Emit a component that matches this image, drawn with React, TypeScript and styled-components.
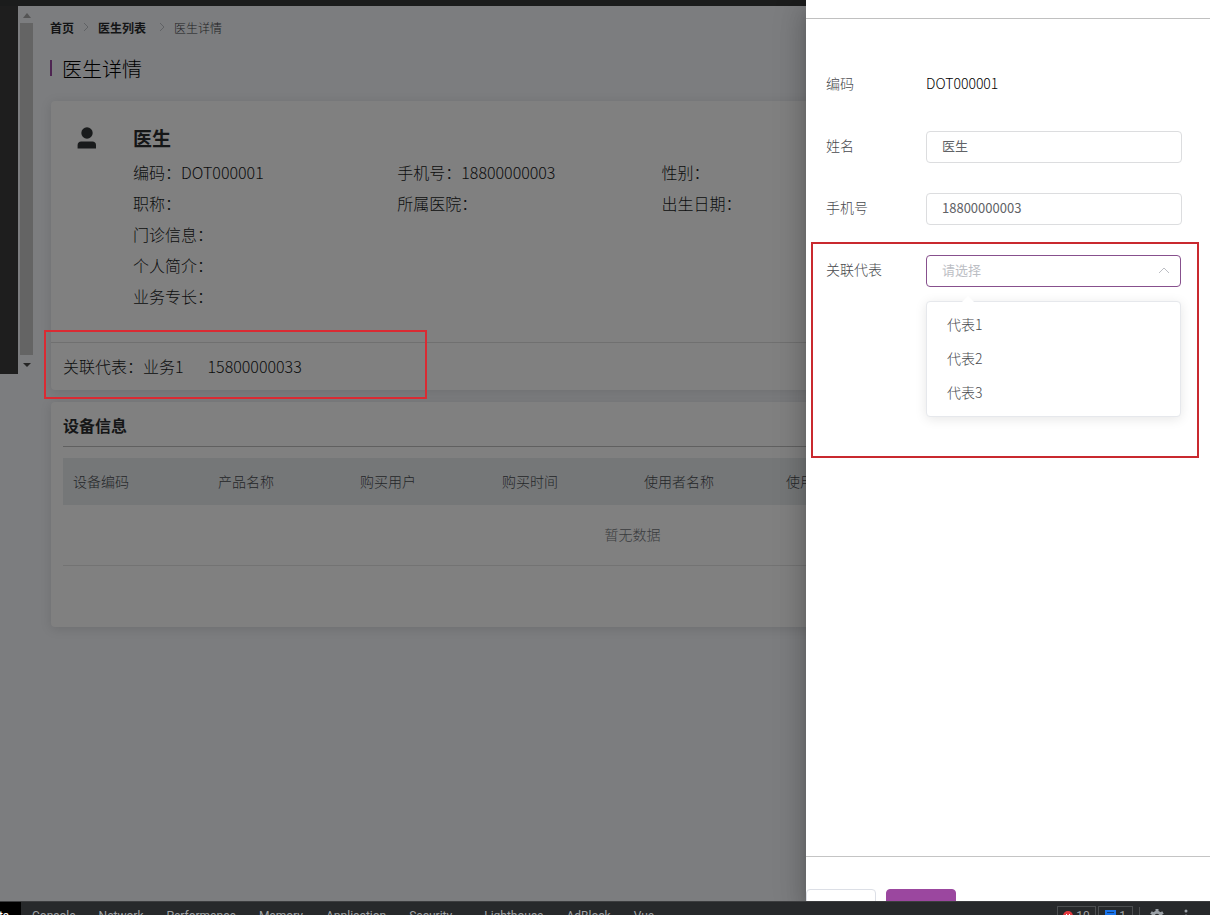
import React from "react";
import styled, { createGlobalStyle } from "styled-components";

const GlobalStyle = createGlobalStyle`
  *, *::before, *::after { box-sizing: border-box; }
  body {
    margin: 0;
    background: #7c7d7f;
    color: #0c0d0e;
    font-family: "Noto Sans CJK SC", sans-serif;
    font-size: 16px;
    font-weight: 300;
  }
  h1, h2, h3, p, ul, dl, dd, dt { margin: 0; padding: 0; font-weight: 300; }
  button, input, select { font-family: inherit; }
`;

const Screen = styled.div`
  display: flex;
  flex-direction: column;
  height: 100vh;
  overflow: hidden;
`;

const Stage = styled.div`
  position: relative;
  flex: 1;
  min-height: 0;
  overflow: hidden;
`;

const Workspace = styled.div`
  display: flex;
  align-items: flex-start;
  border-top: 6px solid #1b1c1c;
`;

const SideMenu = styled.nav`
  flex: none;
  width: 18px;
  height: 368px;
  background: #1e1e1e;
`;

const ScrollBar = styled.div`
  flex: none;
  display: flex;
  flex-direction: column;
  align-items: center;
  justify-content: space-between;
  width: 16px;
  height: 368px;
  padding: 7px 1px 6px 2px;
`;

const Thumb = styled.div`
  flex: 1;
  width: 13px;
  margin: 5px 0 8px;
  background: #646464;
`;

const Arrow = styled.svg`
  display: block;
  flex: none;
  width: 8px;
  height: 5px;
`;

const Page = styled.main`
  flex: 1;
  min-width: 0;
  padding: 9px 0 0 16px;
`;

const Breadcrumb = styled.nav`
  display: flex;
  align-items: center;
  gap: 8px;
  height: 24px;
  font-size: 12px;
  color: #202123;
`;

const Crumb = styled.a`
  color: #131415;
  font-weight: 700;
  text-decoration: none;

  &:last-of-type { padding-right: 4px; }
`;

const PageTitle = styled.h1`
  display: flex;
  align-items: center;
  gap: 10px;
  height: 32px;
  margin: 13px 0 17px;
  font-size: 20px;
  color: #000;

  &::before {
    content: "";
    width: 2px;
    height: 16px;
    background: #4e2552;
  }
`;

const Card = styled.section`
  margin: 0 0 12px 1px;
  border-radius: 4px;
  background: #808080;
  box-shadow: 0 2px 12px rgba(0, 0, 0, 0.12);
`;

const Profile = styled.div`
  display: flex;
  height: 241px;
  padding: 22px 20px 0 26px;
`;

const UserIcon = styled.svg`
  flex: none;
  width: 20px;
  height: 22px;
  margin: 4px 36px 0 0;
`;

const ProfileBody = styled.div`
  flex: 1;
`;

const DoctorName = styled.h2`
  height: 30px;
  color: #151617;
  font-size: 19px;
  line-height: 30px;
  font-weight: 700;
`;

const Facts = styled.dl`
  display: grid;
  grid-template-columns: repeat(4, 1fr);
  margin-top: 4px;
`;

const Fact = styled.div<{ $wide?: boolean }>`
  display: flex;
  grid-column: ${(p) => (p.$wide ? "1 / -1" : "auto")};
  line-height: 31px;
`;

const Related = styled.div`
  position: relative;
  display: flex;
  align-items: center;
  gap: 24px;
  height: 48px;
  padding: 0 12px 2px;
  border-top: 1px solid #707070;
`;

const HighlightBox = styled.div<{ $inset: string; $tone: string }>`
  position: absolute;
  inset: ${(p) => p.$inset};
  border: 2px solid ${(p) => p.$tone};
  pointer-events: none;
`;

const RelatedMark = styled(HighlightBox)`
  width: 383px;
`;

const DeviceCard = styled(Card)`
  height: 225px;
  padding: 0 8px 0 12px;
`;

const SectionTitle = styled.h2`
  height: 45px;
  margin-bottom: 11px;
  border-bottom: 1px solid #606060;
  color: #151617;
  font-size: 16px;
  line-height: 46px;
  font-weight: 700;
`;

const Table = styled.table`
  width: 100%;
  border-collapse: collapse;
  table-layout: fixed;
  font-size: 14px;
`;

const HeadCell = styled.th`
  height: 47px;
  padding: 0 10px 2px;
  background: #757778;
  color: #242628;
  font-weight: 300;
  text-align: left;
  white-space: nowrap;

  &:first-child { width: 145px; }
`;

const EmptyCell = styled.td`
  height: 60px;
  padding: 0 0 2px;
  border-bottom: 1px solid #737373;
  color: #393b3d;
  text-align: center;
`;

const Drawer = styled.aside`
  position: absolute;
  top: 0;
  right: 0;
  bottom: 0;
  display: flex;
  flex-direction: column;
  width: 404px;
  background: #fff;
  box-shadow: 0 8px 10px -5px rgba(0, 0, 0, 0.2), 0 16px 24px 2px rgba(0, 0, 0, 0.14),
    0 6px 30px 5px rgba(0, 0, 0, 0.12);
`;

const DrawerHeader = styled.header`
  flex: none;
  height: 19px;
  border-bottom: 1px solid #c0c0c0;
`;

const Form = styled.form`
  display: flex;
  flex: 1;
  flex-direction: column;
  gap: 30px;
  padding: 50px 28px 0 20px;
  font-size: 14px;
`;

const Field = styled.div`
  position: relative;
  display: flex;
  align-items: flex-start;
  height: 32px;
  line-height: 28px;
`;

const Label = styled.label`
  flex: none;
  width: 100px;
  color: #484a4e;
`;

const Output = styled.output`
  color: #000;
`;

const TextBox = styled.input`
  flex: 1;
  min-width: 0;
  height: 32px;
  padding: 0 15px 3px;
  border: 1px solid #dcdddf;
  border-radius: 4px;
  background: #fff;
  color: #606266;
  font-size: 13px;
`;

const SelectWrap = styled.div`
  position: relative;
  flex: 1;
  margin-right: 1px;
`;

const SelectBox = styled.select`
  display: block;
  width: 100%;
  height: 32px;
  padding: 0 15px 3px;
  border: 1px solid #87508d;
  border-radius: 4px;
  outline: none;
  appearance: none;
  background: #fff;
  color: #bcbec4;
  font-size: 13px;
`;

const Caret = styled.svg`
  position: absolute;
  top: 12px;
  right: 11px;
  width: 12px;
  height: 7px;
`;

const Menu = styled.ul`
  position: absolute;
  top: 46px;
  left: 0;
  right: 0;
  padding: 5px 0 7px;
  border: 1px solid #e6e8ec;
  border-radius: 4px;
  background: #fff;
  box-shadow: 0 2px 12px rgba(0, 0, 0, 0.1);
  list-style: none;

  &::before {
    content: "";
    position: absolute;
    top: -6px;
    left: 35px;
    border: 6px solid transparent;
    border-top: 0;
    border-bottom-color: #fff;
  }
`;

const Option = styled.li`
  padding: 0 20px;
  color: #484a4e;
  line-height: 34px;
`;

const DrawerFooter = styled.footer`
  display: flex;
  flex: none;
  align-items: flex-start;
  gap: 10px;
  height: 45px;
  padding-top: 32px;
  border-top: 1px solid #c4c4c4;
`;

const FooterButton = styled.button<{ $primary?: boolean }>`
  flex: none;
  width: 70px;
  height: 32px;
  border: 1px solid ${(p) => (p.$primary ? "#9b479f" : "#dcdfe6")};
  border-radius: 4px;
  background: ${(p) => (p.$primary ? "#9b479f" : "#fff")};
`;

const DevBar = styled.footer`
  position: relative;
  flex: none;
  height: 14px;
  overflow: hidden;
  border-top: 1px solid #3c3d3f;
  background: #27292b;
  color: #a0a3a6;
  font-family: Roboto, sans-serif;
  font-size: 12px;
  font-weight: 400;
`;

const DevRow = styled.div`
  display: flex;
  align-items: center;
  height: 27px;
`;

const ActiveTab = styled.a`
  display: flex;
  flex: none;
  align-items: center;
  justify-content: flex-end;
  width: 21px;
  height: 27px;
  padding-right: 12px;
  overflow: hidden;
  background: #000;
  color: #fff;
  text-decoration: none;
`;

const DevTabs = styled.nav`
  display: flex;
  flex: 1;
  gap: 32px;
  padding-left: 11px;
`;

const TabGroup = styled.div`
  display: flex;
  gap: 23px;
`;

const DevTab = styled.a`
  color: inherit;
  text-decoration: none;
`;

const DevTools = styled.div`
  display: flex;
  flex: none;
  align-items: center;
  gap: 2px;
`;

const Counter = styled.button<{ $width: number }>`
  display: flex;
  align-items: center;
  justify-content: center;
  gap: 3px;
  width: ${(p) => p.$width}px;
  height: 20px;
  padding: 0;
  border: 1px solid #4c4e50;
  background: none;
  color: #a0a3a6;
  font-size: 12px;
`;

const DevDivider = styled.span`
  width: 1px;
  height: 18px;
  margin: 0 5px 0 4px;
  background: #4c4e50;
`;

const DevAction = styled.button`
  display: flex;
  align-items: center;
  justify-content: center;
  width: 20px;
  height: 20px;
  margin-right: 7px;
  padding: 0;
  border: 0;
  background: none;

  &:last-child { margin-right: 14px; }
`;

const facts: { label: string; value?: string; wide?: boolean }[][] = [
  [
    { label: "编码：", value: "DOT000001" },
    { label: "手机号：", value: "18800000003" },
    { label: "性别：" },
  ],
  [{ label: "职称：" }, { label: "所属医院：" }, { label: "出生日期：" }],
  [{ label: "门诊信息：", wide: true }],
  [{ label: "个人简介：", wide: true }],
  [{ label: "业务专长：", wide: true }],
];

const columns = ["设备编码", "产品名称", "购买用户", "购买时间", "使用者名称", "使用", "", ""];
const representatives = ["代表1", "代表2", "代表3"];
const devTabs = [
  ["Console", "Network", "Performance", "Memory", "Application", "Security"],
  ["Lighthouse", "AdBlock", "Vue"],
];

const CrumbArrow = () => (
  <svg width="8" height="10" viewBox="0 0 8 10" fill="none" stroke="#606265" aria-hidden="true">
    <path d="M2 1l4 4-4 4" />
  </svg>
);

export default function App() {
  return (
    <Screen lang="zh-CN">
      <GlobalStyle />
      <Stage>
        <Workspace>
          <SideMenu aria-label="菜单" />
          <ScrollBar aria-hidden="true">
            <Arrow viewBox="0 0 8 5">
              <path d="M0 5l4-5 4 5z" fill="#555" />
            </Arrow>
            <Thumb />
            <Arrow viewBox="0 0 8 5">
              <path d="M0 0h8L4 4z" fill="#252525" />
            </Arrow>
          </ScrollBar>
          <Page>
            <Breadcrumb>
              <Crumb href="#home">首页</Crumb>
              <CrumbArrow />
              <Crumb href="#doctors">医生列表</Crumb>
              <CrumbArrow />
              <span>医生详情</span>
            </Breadcrumb>
            <PageTitle>医生详情</PageTitle>
            <Card>
              <Profile>
                <UserIcon viewBox="0 0 20 22" fill="#191b1c" aria-hidden="true">
                  <circle cx="10" cy="6" r="5.7" />
                  <path d="M0.6 21.500v-3.500c0-2 1.500-3.500 3.500-3.500h11.400c2 0 3.500 1.500 3.500 3.500v3.500z" />
                </UserIcon>
                <ProfileBody>
                  <DoctorName>医生</DoctorName>
                  <Facts>
                    {facts.map((row, i) => (
                      <React.Fragment key={i}>
                        {row.map((f) => (
                          <Fact key={f.label} $wide={f.wide}>
                            <dt>{f.label}</dt>
                            <dd>{f.value}</dd>
                          </Fact>
                        ))}
                        {!row[0].wide && <Fact />}
                      </React.Fragment>
                    ))}
                  </Facts>
                </ProfileBody>
              </Profile>
              <Related>
                <span>关联代表：业务1</span>
                <span>15800000033</span>
                <RelatedMark $inset="-13px auto -9px -7px" $tone="#da2b33" />
              </Related>
            </Card>
            <DeviceCard>
              <SectionTitle>设备信息</SectionTitle>
              <Table>
                <thead>
                  <tr>
                    {columns.map((c, i) => (
                      <HeadCell key={i}>{c}</HeadCell>
                    ))}
                  </tr>
                </thead>
                <tbody>
                  <tr>
                    <EmptyCell colSpan={columns.length}>暂无数据</EmptyCell>
                  </tr>
                </tbody>
              </Table>
            </DeviceCard>
          </Page>
        </Workspace>
        <Drawer>
          <DrawerHeader />
          <Form>
            <Field>
              <Label htmlFor="code">编码</Label>
              <Output id="code">DOT000001</Output>
            </Field>
            <Field>
              <Label htmlFor="name">姓名</Label>
              <TextBox id="name" defaultValue="医生" />
            </Field>
            <Field>
              <Label htmlFor="phone">手机号</Label>
              <TextBox id="phone" defaultValue="18800000003" />
            </Field>
            <Field>
              <Label htmlFor="rep">关联代表</Label>
              <SelectWrap>
                <SelectBox id="rep" defaultValue="">
                  <option value="">请选择</option>
                  {representatives.map((r) => (
                    <option key={r}>{r}</option>
                  ))}
                </SelectBox>
                <Caret viewBox="0 0 12 7" fill="none" stroke="#bcbec4" aria-hidden="true">
                  <path d="M1 6l5-5 5 5" />
                </Caret>
                <Menu role="listbox" aria-label="关联代表">
                  {representatives.map((r) => (
                    <Option key={r} role="option">
                      {r}
                    </Option>
                  ))}
                </Menu>
              </SelectWrap>
              <HighlightBox $inset="-13px -17px -171px -15px" $tone="#c9292f" />
            </Field>
          </Form>
          <DrawerFooter>
            <FooterButton type="button" aria-label="取消" />
            <FooterButton type="button" aria-label="确定" $primary />
          </DrawerFooter>
        </Drawer>
      </Stage>
      <DevBar lang="en">
        <DevRow>
          <ActiveTab href="#elements">Elements</ActiveTab>
          <DevTabs>
            {devTabs.map((group) => (
              <TabGroup key={group[0]}>
                {group.map((t) => (
                  <DevTab key={t} href={`#${t}`}>
                    {t}
                  </DevTab>
                ))}
              </TabGroup>
            ))}
          </DevTabs>
          <DevTools>
            <Counter $width={39}>
              <svg width="10" height="10" viewBox="0 0 10 10" aria-hidden="true">
                <circle cx="5" cy="5" r="5" fill="#e5393f" />
                <path d="M3 3l4 4M7 3L3 7" stroke="#fff" />
              </svg>
              10
            </Counter>
            <Counter $width={35}>
              <svg width="11" height="11" viewBox="0 0 11 11" aria-hidden="true">
                <path d="M0 0h11v8H3l-3 3z" fill="#1a73e8" />
                <path d="M2 2.500h7M2 5.500h5" stroke="#123a70" />
              </svg>
              1
            </Counter>
            <DevDivider />
            <DevAction aria-label="Settings">
              <svg width="14" height="14" viewBox="0 0 14 14" aria-hidden="true">
                <circle cx="7" cy="7" r="3.700" fill="none" stroke="#9aa0a6" strokeWidth="3" />
                <path
                  d="M7 0v3M7 11v3M1 3.500l2.600 1.500M10.400 9l2.600 1.500M1 10.500L3.600 9M10.400 5L13 3.500"
                  stroke="#9aa0a6"
                  strokeWidth="3"
                />
              </svg>
            </DevAction>
            <DevAction aria-label="More">
              <svg width="4" height="14" viewBox="0 0 4 14" fill="#9aa0a6" aria-hidden="true">
                <circle cx="2" cy="2" r="1.500" />
                <circle cx="2" cy="7" r="1.500" />
                <circle cx="2" cy="12" r="1.500" />
              </svg>
            </DevAction>
          </DevTools>
        </DevRow>
      </DevBar>
    </Screen>
  );
}
